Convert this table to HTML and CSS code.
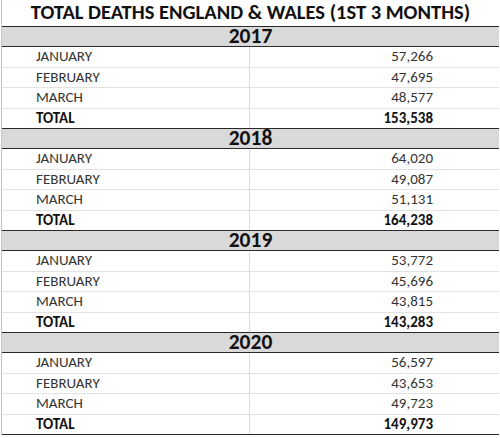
FILE: index.html
```html
<!DOCTYPE html>
<html>
<head>
<meta charset="utf-8">
<link rel="stylesheet" href="styles.css">
</head>
<body>
<div class="sheet">
  <div class="title">TOTAL DEATHS ENGLAND &amp; WALES (1ST 3 MONTHS)</div>

  <div class="year">2017</div>
  <div class="row r1"><span class="lab">JANUARY</span><span class="num">57,266</span></div>
  <div class="row r2"><span class="lab">FEBRUARY</span><span class="num">47,695</span></div>
  <div class="row r3"><span class="lab">MARCH</span><span class="num">48,577</span></div>
  <div class="row total"><span class="lab">TOTAL</span><span class="num">153,538</span></div>

  <div class="year">2018</div>
  <div class="row r1"><span class="lab">JANUARY</span><span class="num">64,020</span></div>
  <div class="row r2"><span class="lab">FEBRUARY</span><span class="num">49,087</span></div>
  <div class="row r3"><span class="lab">MARCH</span><span class="num">51,131</span></div>
  <div class="row total"><span class="lab">TOTAL</span><span class="num">164,238</span></div>

  <div class="year">2019</div>
  <div class="row r1"><span class="lab">JANUARY</span><span class="num">53,772</span></div>
  <div class="row r2"><span class="lab">FEBRUARY</span><span class="num">45,696</span></div>
  <div class="row r3"><span class="lab">MARCH</span><span class="num">43,815</span></div>
  <div class="row total"><span class="lab">TOTAL</span><span class="num">143,283</span></div>

  <div class="year">2020</div>
  <div class="row r1"><span class="lab">JANUARY</span><span class="num">56,597</span></div>
  <div class="row r2"><span class="lab">FEBRUARY</span><span class="num">43,653</span></div>
  <div class="row r3"><span class="lab">MARCH</span><span class="num">49,723</span></div>
  <div class="row total last"><span class="lab">TOTAL</span><span class="num">149,973</span></div>
</div>
</body>
</html>
```

FILE: styles.css
```css
html, body {
  margin: 0;
  padding: 0;
  background: #ffffff;
}

.sheet {
  width: 497px;
  margin-left: 1px;
  border-left: 1px solid #c6c6c6;
  font-family: Carlito, Lato, "Open Sans", sans-serif;
  color: #222222;
}

.title {
  height: 26px;
  line-height: 25px;
  text-align: center;
  font-weight: 700;
  font-size: 20.5px;
  color: #111111;
  white-space: nowrap;
}

.year {
  height: 19px;
  line-height: 18px;
  border-top: 1px solid #2a2a2a;
  border-bottom: 1px solid #2a2a2a;
  background: #d9d9d9;
  text-align: center;
  font-weight: 700;
  font-size: 21.5px;
  color: #111111;
}

.row {
  display: grid;
  grid-template-columns: 248px 1fr;
  font-size: 15px;
  color: #333333;
}

.row .lab {
  padding-left: 34px;
  border-right: 1px solid #dcdcdc;
}

.row .num {
  text-align: right;
  padding-right: 66px;
}

.r1 {
  height: 20px;
  line-height: 19px;
  border-bottom: 1px solid #e2e2e2;
}

.r2 {
  height: 19px;
  line-height: 19px;
  border-bottom: 1px solid #e2e2e2;
}

.r3 {
  height: 20px;
  line-height: 19px;
  border-bottom: 1px solid #e2e2e2;
}

.total {
  height: 19px;
  line-height: 19px;
  font-weight: 700;
  color: #111111;
}

.last {
  border-bottom: 1px solid #2a2a2a;
}
```
